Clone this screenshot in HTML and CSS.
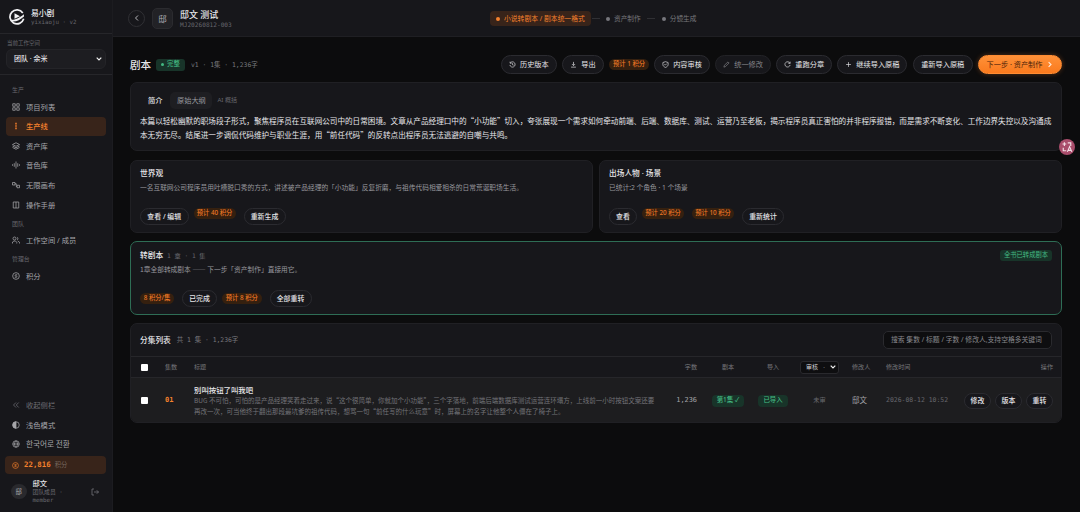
FILE: index.html
```html
<!DOCTYPE html>
<html lang="zh-CN">
<head>
<meta charset="utf-8">
<title>易小剧</title>
<link rel="stylesheet" href="styles.css">
</head>
<body>
<div class="app">
  <aside class="sidebar">
    <div class="brand">
      <svg class="logo" viewBox="0 0 16 16"><path d="M13.800 4A7 7 0 1 0 14.700 9.800" fill="none" stroke="#f2f2f4" stroke-width="1.700"/><path d="M1.500 10.600C5 11.300 9 10 14.800 5.200L15 7.500C11 11 7 13 3 12.400Z" fill="#f2f2f4" stroke="none"/><path d="M5.500 4.200L11 7.200L5.500 9.800Z" fill="#f2f2f4" stroke="none"/></svg>
      <div><div class="brand-name">易小剧</div><div class="brand-sub mono">yixiaoju · v2</div></div>
    </div>
    <div class="workspace">
      <div class="ws-label">当前工作空间</div>
      <div class="ws-select"><span>团队 · 余米</span><svg class="chev" viewBox="0 0 6 4"><path d="M.7.7L3 3L5.3.7"/></svg></div>
    </div>
    <nav class="nav">
      <div class="sec">生产</div>
      <div class="item"><svg viewBox="0 0 16 16"><path d="M1.500 1.500h5v5h-5zM9.500 1.500h5v5h-5zM1.500 9.500h5v5h-5zM9.500 9.500h5v5h-5z"/></svg>项目列表</div>
      <div class="item active"><svg viewBox="0 0 16 16"><path d="M8 1v14M6.500 3h3M6.500 8h3M6.500 13h3"/></svg>生产线</div>
      <div class="item"><svg viewBox="0 0 16 16"><path d="M8 1.500l7 3.500-7 3.500L1 5zM1 8l7 3.500L15 8M1 11l7 3.500 7-3.500"/></svg>资产库</div>
      <div class="item"><svg viewBox="0 0 16 16"><path d="M1 6.500v3M4.500 4.500v7M8 1v14M11.500 4.500v7M15 6.500v3"/></svg>音色库</div>
      <div class="item"><svg viewBox="0 0 16 16"><path d="M1 3h5v5H1zM10 8.500h5v5h-5zM6 5.500h2.500v5.500H10"/></svg>无限画布</div>
      <div class="item"><svg viewBox="0 0 16 16"><path d="M2.500 2h11v12h-11zM8 2v12"/></svg>操作手册</div>
      <div class="sec team">团队</div>
      <div class="item"><svg viewBox="0 0 16 16"><circle cx="5" cy="5" r="3"/><path d="M1 15v-3l3-2h3l2.500 2.500V15M10 2.500a3 3 0 0 1 0 5.500M11.500 10l3.500 2.500V15"/></svg>工作空间 / 成员</div>
      <div class="sec admin">管理台</div>
      <div class="item"><svg viewBox="0 0 16 16"><circle cx="8" cy="8" r="6.700"/><path d="M10.500 5.500H7a1.300 1.300 0 0 0 0 2.500h2a1.300 1.300 0 0 1 0 2.500H5.500"/></svg>积分</div>
    </nav>
    <div class="foot">
      <div class="item dim"><svg viewBox="0 0 16 16"><path d="M8 3L3 8l5 5M13.500 3l-5 5 5 5"/></svg>收起侧栏</div>
      <div class="item"><svg viewBox="0 0 16 16"><circle cx="8" cy="8" r="6.500"/><path d="M8 1.500a6.500 6.500 0 0 0 0 13z" class="solid"/></svg>浅色模式</div>
      <div class="item ko"><svg viewBox="0 0 16 16"><circle cx="8" cy="8" r="6.500"/><path d="M1.500 8h13M8 1.500c-4 4-4 9 0 13c4-4 4-9 0-13"/></svg>한국어로 전환</div>
      <div class="credits"><svg viewBox="0 0 16 16"><circle cx="8" cy="8" r="6.700"/><path d="M10.500 5.500H7a1.300 1.300 0 0 0 0 2.500h2a1.300 1.300 0 0 1 0 2.500H5.500"/></svg><b class="mono">22,816</b><span>积分</span></div>
      <div class="user">
        <div class="avatar">邸</div>
        <div class="user-info"><div class="user-name">邸文</div><div class="user-role mono">团队成员 ·<br>member</div></div>
        <svg class="logout" viewBox="0 0 16 16"><path d="M6 2H2v12h4M6 8h9M11.500 4.500L15 8l-3.500 3.500"/></svg>
      </div>
    </div>
  </aside>
  <div class="main">
    <header class="topbar">
      <div class="back"><svg viewBox="0 0 16 16"><path d="M10 3L5 8l5 5"/></svg></div>
      <div class="proj-icon">邸</div>
      <div class="proj"><div class="proj-name">邸文 测试</div><div class="proj-id mono">MJ20260812-003</div></div>
      <div class="steps">
        <div class="step on"><i></i>小说转剧本 / 剧本统一格式</div><hr>
        <div class="step"><i></i>资产制作</div><hr class="gap">
        <div class="step"><i></i>分镜生成</div>
      </div>
    </header>
    <main class="content">
      <div class="head">
        <h1>剧本</h1>
        <span class="tag done"><i></i>完整</span>
        <span class="meta mono">v1 · 1集 · 1,236字</span>
        <div class="actions">
          <button class="btn w56"><svg viewBox="0 0 16 16"><path d="M3 4.500A6 6 0 1 1 2 9M2.500 1.500v3.500H6M8 5v3.500l2.500 1"/></svg>历史版本</button>
          <button class="btn w42"><svg viewBox="0 0 16 16"><path d="M8 2v8M4.500 7L8 10.500 11.500 7M2.500 14h11"/></svg>导出</button>
          <span class="cost one">预计 1 积分</span>
          <button class="btn w56"><svg viewBox="0 0 16 16"><path d="M8 1.500l6 2V8c0 3-2.500 5.500-6 6.700C4.500 13.500 2 11 2 8V3.500zM5.500 7.500l2 2 3.500-3.500"/></svg>内容审核</button>
          <button class="btn w56 off"><svg viewBox="0 0 16 16"><path d="M2 14l1-4 8.500-8 2.500 2.500L5.500 13z"/></svg>统一修改</button>
          <button class="btn w56"><svg viewBox="0 0 16 16"><path d="M13.500 5A6 6 0 1 0 14 9M14 1.500V5.500H10"/></svg>重跑分章</button>
          <button class="btn w70"><svg viewBox="0 0 16 16"><path d="M8 2.500v11M2.500 8h11"/></svg>继续导入原稿</button>
          <button class="btn w60">重新导入原稿</button>
          <button class="btn next">下一步 · 资产制作<svg viewBox="0 0 16 16"><path d="M6 2.500L11.500 8 6 13.500"/></svg></button>
        </div>
      </div>

      <section class="card intro">
        <div class="tabs"><span class="tab cur">简介</span><span class="tab alt">原始大纲</span><span class="ai">AI 概括</span></div>
        <p>本篇以轻松幽默的职场段子形式，聚焦程序员在互联网公司中的日常困境。文章从产品经理口中的“小功能”切入，夸张展现一个需求如何牵动前端、后端、数据库、测试、运营乃至老板，揭示程序员真正害怕的并非程序报错，而是需求不断变化、工作边界失控以及沟通成<br>本无穷无尽。结尾进一步调侃代码维护与职业生涯，用“前任代码”的反转点出程序员无法逃避的自嘲与共鸣。</p>
      </section>

      <div class="pair">
        <section class="card block">
          <h2>世界观</h2>
          <p>一名互联网公司程序员用吐槽脱口秀的方式，讲述被产品经理的「小功能」反复折磨，与祖传代码相爱相杀的日常荒诞职场生活。</p>
          <div class="row"><button class="sbtn w49">查看 / 编辑</button><span class="cost up">预计 40 积分</span><button class="sbtn w42 push">重新生成</button></div>
        </section>
        <section class="card block">
          <h2>出场人物 · 场景</h2>
          <p class="latin">已统计:2 个角色 · 1 个场景</p>
          <div class="row"><button class="sbtn w28">查看</button><span class="cost up">预计 20 积分</span><span class="cost up second">预计 10 积分</span><button class="sbtn w42 push">重新统计</button></div>
        </section>
      </div>

      <section class="card block green">
        <div class="titleline"><h2>转剧本</h2><span class="mono">1 章 · 1 集</span><span class="tag all">全书已转成剧本</span></div>
        <p>1章全部转成剧本 —— 下一步「资产制作」直接用它。</p>
        <div class="row"><span class="cost first">8 积分/集</span><button class="sbtn w35">已完成</button><span class="cost one">预计 8 积分</span><button class="sbtn w42 push">全部重转</button></div>
      </section>

      <section class="card list">
        <div class="list-head"><h2>分集列表</h2><span class="mono">共 1 集 · 1,236字</span><div class="search">搜索 集数 / 标题 / 字数 / 修改人,支持空格多关键词</div></div>
        <div class="grid th">
          <i class="check"></i><span>集数</span><span>标题</span><span class="r">字数</span><span class="c">剧本</span><span class="c">导入</span>
          <span class="c"><span class="filter">审核 <em>·</em><svg class="chev" viewBox="0 0 6 4"><path d="M.7.7L3 3L5.3.7"/></svg></span></span>
          <span>修改人</span><span>修改时间</span><span class="r">操作</span>
        </div>
        <div class="grid td">
          <i class="check"></i><b class="num mono">01</b>
          <div class="ep"><h3>别叫按钮了叫我吧</h3><p>BUG 不可怕，可怕的是产品经理笑着走过来，说“这个很简单，你就加个小功能”，三个字落地，前端后端数据库测试运营连环塌方，上线前一小时按钮文案还要<br>再改一次，可当他终于翻出那段最坑爹的祖传代码，想骂一句“前任写的什么玩意”时，屏幕上的名字让他整个人僵在了椅子上。</p></div>
          <span class="r mono words">1,236</span><span class="c"><span class="tag pill">第1集 ✓</span></span><span class="c"><span class="tag pill">已导入</span></span>
          <span class="c state">未审</span><span class="who">邸文</span><span class="mono time">2026-08-12 10:52</span>
          <span class="ops"><button class="sbtn">修改</button><button class="sbtn">版本</button><button class="sbtn">重转</button></span>
        </div>
      </section>
    </main>
  </div>
  <div class="translate"><svg viewBox="0 0 16 16"><path d="M2 4h5M4.500 1.500v5M9 2.500h4v4M3 9v4h4M8.500 14.500L11.500 7.500l3 7M9.500 12.500h4"/></svg></div>
</div>
</body>
</html>
```
FILE: styles.css
```css
* { box-sizing: border-box; margin: 0; padding: 0; }
body {
  width: 1080px; height: 512px; overflow: hidden;
  background: #0c0c0d; color: #e6e6e9;
  font-family: "Noto Sans", "Noto Sans CJK SC", sans-serif;
  font-size: 7.3px; line-height: 1.4; white-space: nowrap;
}
.mono { font-family: "DejaVu Sans Mono", "Noto Sans CJK SC", monospace; }
svg { flex: none; fill: none; stroke: currentColor; stroke-width: 1.5; }
.solid { fill: currentColor; }
i { display: block; font-style: normal; }
em { font-style: normal; }
.app { position: relative; display: flex; height: 512px; }

.sidebar { width: 113px; flex: none; display: flex; flex-direction: column; background: #17171b; border-right: 1px solid #1c1c20; }
.brand { height: 34px; display: flex; align-items: center; gap: 6px; padding-left: 9px; border-bottom: 1px solid #26262a; }
.logo { width: 16px; height: 16px; }
.brand-name { font-size: 7.8px; line-height: 10px; font-weight: 500; }
.brand-sub { font-size: 5.8px; line-height: 8px; color: #66666c; }
.workspace { height: 41px; padding: 5px 6px 0; border-bottom: 1px solid #26262a; }
.ws-label { font-size: 5.5px; line-height: 8px; color: #67676d; padding-left: 1px; }
.ws-select { height: 20px; margin-top: 2px; padding: 0 3px 0 7px; display: flex; align-items: center; justify-content: space-between; border: 1px solid #242428; border-radius: 6px; background: #1d1d21; font-size: 7px; font-weight: 500; }
.chev { width: 6px; height: 4px; stroke: #f0f0f0; stroke-width: 1.2; }
.nav { padding: 8.7px 6px 0; }
.sec { height: 13.5px; line-height: 13px; padding-left: 6px; font-size: 5.9px; color: #67676d; }
.sec.team { height: 16px; line-height: 18px; }
.sec.admin { height: 16px; line-height: 18px; }
.item { height: 19.7px; padding-left: 6px; display: flex; align-items: center; gap: 6px; color: #a5a5aa; font-size: 7.3px; }
.item svg { width: 8px; height: 8px; }
.item.active { background: #38241a; color: #f5812d; border-radius: 4px; height: 19px; font-weight: 500; }
.foot { margin-top: auto; padding: 0 5px 6px 6px; }
.foot .item { height: 19.5px; }
.item.dim { color: #6e6e74; }
.item.ko { font-family: "Noto Sans CJK KR", sans-serif; font-size: 7.65px; }
.credits { height: 18px; margin: 2px 1px 0 -1px; padding-left: 7px; display: flex; align-items: center; background: #38241a; color: #f5812d; border-radius: 4px; }
.credits svg { width: 7px; height: 7px; margin-right: 5px; }
.credits b { font-size: 7.4px; }
.credits span { margin-left: 4px; font-size: 6.3px; color: #77685f; }
.user { height: 32px; padding: 3px 8px 0 5px; display: flex; align-items: center; gap: 6px; }
.avatar { width: 15.5px; height: 15.5px; border-radius: 50%; background: #29292d; font-size: 6.4px; line-height: 15px; text-align: center; color: #b0b0b5; }
.user-name { font-size: 7.3px; line-height: 9px; font-weight: 500; }
.user-role { font-size: 5.8px; line-height: 8.2px; color: #6c6c72; }
.logout { width: 8px; height: 8px; margin-left: auto; color: #77777d; }

.main { flex: 1; min-width: 0; }
.topbar { height: 37px; position: relative; display: flex; align-items: center; padding-left: 15px; background: #17171b; border-bottom: 1px solid #1f1f23; }
.back { width: 17px; height: 17px; border: 1px solid #303034; border-radius: 50%; display: grid; place-items: center; }
.back svg { width: 8px; height: 8px; }
.proj-icon { width: 21px; height: 21px; margin-left: 7px; border: 1px solid #2b2b2f; border-radius: 5px; background: #222226; font-size: 8.5px; line-height: 19px; text-align: center; color: #b0b0b5; }
.proj { margin-left: 7px; padding-top: 1px; }
.proj-name { font-size: 9px; line-height: 11px; font-weight: 500; }
.proj-id { font-size: 6.15px; line-height: 9px; color: #66666c; }
.steps { position: absolute; left: 377px; top: 11px; height: 15px; display: flex; align-items: center; }
.steps hr { width: 8px; border: 0; border-top: 1px solid #303034; margin: 0 6px 0 1px; }
.steps hr.gap { margin-left: 6px; margin-right: 7px; }
.step { display: flex; align-items: center; gap: 4px; font-size: 6.7px; color: #77777c; }
.step i { width: 4px; height: 4px; border-radius: 50%; background: #77777c; }
.step.on { width: 101px; height: 15px; padding-left: 6px; border-radius: 4px; background: #38241a; color: #f5812d; font-size: 6.8px; }
.step.on i { background: #f5812d; }

.content { padding: 18px 18px 0 17px; }
.head { height: 19px; display: flex; align-items: center; }
h1 { font-size: 10.5px; font-weight: 500; line-height: 19px; padding-top: 1px; }
.tag { color: #43b982; background: #183429; border-radius: 3px; font-size: 6.4px; display: inline-flex; align-items: center; justify-content: center; }
.done { width: 29px; height: 12px; margin-left: 5px; gap: 3px; font-weight: 500; }
.done i { width: 3px; height: 3px; border-radius: 50%; background: #43b982; }
.meta { margin-left: 6px; font-size: 6.4px; line-height: 12px; color: #77777c; }
.actions { margin-left: auto; display: flex; align-items: center; gap: 5.3px; }
button { font: inherit; color: inherit; }
.btn { height: 19px; display: flex; align-items: center; justify-content: center; gap: 4px; border: 1px solid #2b2b30; border-radius: 10px; background: #17171b; font-size: 7.2px; }
.btn svg { width: 7px; height: 7px; }
.w56 { width: 55.8px; } .w42 { width: 42px; } .w70 { width: 70px; } .w60 { width: 60px; }
.w49 { width: 48.5px; } .w28 { width: 28px; } .w35 { width: 35px; }
.btn.off { color: #85858a; border-color: #222226; }
.btn.next { width: 84px; background: linear-gradient(#ff9138, #fa7a1e); border-color: #ff8c32; color: #4b2209; box-shadow: 0 0 5px #f5812d55; }
.btn.next svg { color: #ffe9d8; stroke-width: 2.5; }
.cost { width: 42px; height: 11px; border-radius: 6px; background: #35200f; color: #ed7725; font-size: 6.3px; line-height: 10.5px; font-weight: 500; text-align: center; }
.cost.one { width: 39.5px; }
.cost.first { width: 34px; }

.card { background: #17171b; border: 1px solid #202024; border-radius: 7px; }
.intro { height: 69px; margin-top: 8px; padding: 9px 9px 0; }
.tabs { height: 17px; display: flex; align-items: center; }
.tab { height: 17px; line-height: 17px; font-size: 7.2px; }
.cur { padding: 0 8px; font-weight: 500; }
.alt { width: 42px; text-align: center; background: #1e1e22; border-radius: 5px; color: #98989e; }
.ai { margin-left: 5px; font-size: 6.1px; color: #67676d; }
/* Running text keeps full-width quotation marks from the CJK face. */
.intro p, .block p, .ep p { font-family: "Noto Sans CJK SC", sans-serif; }
.intro p { margin-top: 5px; font-size: 7.6px; line-height: 13.6px; }
.pair { display: grid; grid-template-columns: 1fr 1fr; gap: 6px; margin-top: 9px; }
.block { height: 73px; padding: 7px 9px 0; }
h2 { font-size: 7.7px; line-height: 11px; font-weight: 500; }
.block p { margin-top: 3px; font-size: 6.72px; line-height: 11px; color: #98989e; }
.block p.latin { font-family: "Noto Sans", "Noto Sans CJK SC", sans-serif; }
.row { height: 17px; margin-top: 15px; display: flex; align-items: center; }
.sbtn { height: 17px; border: 1px solid #2b2b30; border-radius: 9px; background: #17171b; font-size: 6.9px; line-height: 14px; font-weight: 500; }
.row .cost { margin-left: 5px; }
.row .up { align-self: flex-start; }
.row .second { margin-left: 8px; }
.row .push { margin-left: 8px; }
.row .first { margin: 0 8px 0 0; }
.row .one { margin-left: 5px; }
.green { margin-top: 8px; height: 74px; padding-top: 8px; border-color: #2e6d55; }
.titleline { display: flex; align-items: center; height: 11px; }
.titleline .mono { margin-left: 4px; font-size: 6.2px; line-height: 11px; color: #67676d; }
.tag.all { margin-left: auto; width: 52px; height: 11px; font-size: 6.3px; }
.list { margin-top: 8px; height: 100px; overflow: hidden; }
.list-head { height: 32px; padding: 0 9px; display: flex; align-items: center; }
.list-head .mono { margin-left: 6px; font-size: 6.4px; line-height: 11px; color: #77777c; }
.search { width: 169px; height: 18px; margin-left: auto; padding: 0 7px; border: 1px solid #2a2a2e; border-radius: 5px; background: #0e0e10; color: #88888d; font-size: 6.8px; line-height: 16px; }
.grid { display: grid; grid-template-columns: 24px 29px 468px 35px 62px 28px 65px 34px 66px 1fr; padding: 0 8px 0 10px; align-items: center; }
.th { height: 22px; border: solid #26262a; border-width: 1px 0; font-size: 6.1px; color: #77777c; }
.td { height: 45px; background: #1d1d1f; }
.check { width: 7px; height: 7px; background: #fff; border-radius: 1px; }
.r { text-align: right; }
.c { display: flex; justify-content: center; }
.filter { width: 39px; height: 13px; padding: 0 2px 0 5px; display: flex; align-items: center; justify-content: space-between; border: 1px solid #29292d; border-radius: 3px; background: #0e0e10; color: #d0d0d3; font-size: 6px; }
.num { font-size: 7px; color: #f5812d; }
h3 { font-size: 7.4px; line-height: 10px; font-weight: 500; }
.ep p { font-size: 6.5px; line-height: 10.4px; color: #737378; }
.words { font-size: 6.9px; color: #a5a5aa; }
.pill { height: 12px; padding: 0 5px; border-radius: 4px; font-weight: 500; }
.state { font-size: 6.2px; color: #67676d; }
.who { font-size: 7.5px; color: #a5a5aa; }
.time { font-size: 6.45px; color: #67676d; }
.ops { display: flex; justify-content: flex-end; gap: 4px; }
.ops .sbtn { width: 27px; height: 16px; line-height: 13px; }
.translate { position: absolute; left: 1059px; top: 139px; width: 16px; height: 16px; border-radius: 50%; background: #a94d6b; display: grid; place-items: center; color: #f3dfe6; }
.translate svg { width: 12px; height: 12px; }
```
